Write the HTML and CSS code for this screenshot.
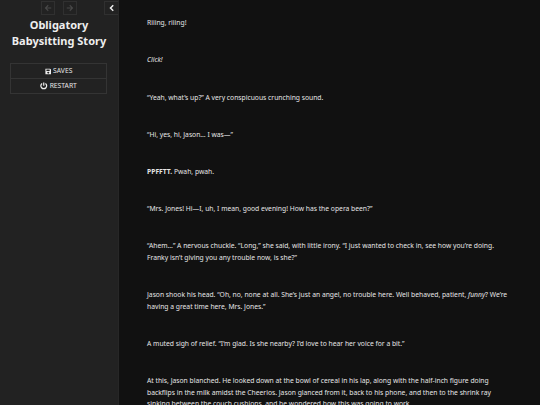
FILE: index.html
```
<!DOCTYPE html>
<html lang="en">
<head>
  <meta charset="UTF-8">
  <meta name="viewport" content="width=device-width, initial-scale=1.0">
  <title>Obligatory Babysitting Story</title>
  <link rel="stylesheet" href="styles.css">
</head>
<body>
<div id="ui-bar">
  <div class="tray">
    <button class="history" disabled aria-label="Back"><svg viewBox="0 0 16 16"><path d="M14.500 8H3M8.500 2.500L3 8l5.500 5.500"/></svg></button>
    <button class="history" disabled aria-label="Forward"><svg viewBox="0 0 16 16"><path d="M1.500 8H13M7.500 2.500L13 8l-5.500 5.500"/></svg></button>
    <button class="toggle" aria-label="Toggle sidebar"><svg viewBox="0 0 16 16"><path d="M10.500 2.500L5 8l5.500 5.500"/></svg></button>
  </div>
  <h1>Obligatory Babysitting Story</h1>
  <ul class="menu">
    <li><a><svg viewBox="0 0 16 16"><path fill-rule="evenodd" d="M1 1h11.500l2.500 2.500V15H1zM3.500 3v3.500h8V3zM8 8.500a2.300 2.300 0 1 0 .01 0z"/></svg><span>SAVES</span></a></li>
    <li><a><svg class="power" viewBox="0 0 16 16"><path d="M4.500 3a6.200 6.200 0 1 0 7 0M8 1v7"/></svg><span>RESTART</span></a></li>
  </ul>
</div>
<div id="story">
  <p>Riiing, riiing!</p>
  <p><em>Click!</em></p>
  <p>“Yeah, what’s up?” A very conspicuous crunching sound.</p>
  <p>“Hi, yes, hi, Jason… I was—”</p>
  <p><strong>PPFFTT.</strong> Pwah, pwah.</p>
  <p>“Mrs. Jones! Hi—I, uh, I mean, good evening! How has the opera been?”</p>
  <p>“Ahem…” A nervous chuckle. “Long,” she said, with little irony. “I just wanted to check in, see how you’re doing. Franky isn’t giving you any trouble now, is she?”</p>
  <p>Jason shook his head. “Oh, no, none at all. She’s just an angel, no trouble here. Well behaved, patient, <em>funny</em>? We’re having a great time here, Mrs. Jones.”</p>
  <p>A muted sigh of relief. “I’m glad. Is she nearby? I’d love to hear her voice for a bit.”</p>
  <p>At this, Jason blanched. He looked down at the bowl of cereal in his lap, along with the half-inch figure doing backflips in the milk amidst the Cheerios. Jason glanced from it, back to his phone, and then to the shrink ray sinking between the couch cushions, and he wondered how this was going to work.</p>
</div>
</body>
</html>
```
FILE: styles.css
```
* {
  box-sizing: border-box;
}
body {
  display: flex;
  height: 405px;
  margin: 0;
  overflow: hidden;
  background: #111;
  color: #e6e6e6;
  font-family: "Noto Sans", sans-serif;
  font-size: 6.75px;
  line-height: 11.8px;
}
#ui-bar {
  flex: none;
  width: 119px;
  height: 405px;
  background: #222;
  border-right: 1px solid #272727;
}
.tray {
  display: flex;
  height: 17px;
  padding: 1px 0 0 41px;
}
.tray button {
  display: flex;
  align-items: center;
  justify-content: center;
  width: 14px;
  height: 14px;
  padding: 0;
  background: transparent;
  border: 1px solid #303030;
}
.tray svg {
  flex: none;
  width: 8px;
  height: 8px;
  fill: none;
  stroke: #eee;
  stroke-width: 3;
}
.tray .history {
  margin-right: 8px;
}
.tray .history svg {
  stroke: #484848;
  stroke-width: 2.2;
}
.tray .toggle {
  margin-left: auto;
  border-right: none;
}
h1 {
  margin: 0 8px;
  color: #eee;
  font-size: 11px;
  line-height: 16.2px;
  text-align: center;
}
.menu {
  margin: 13.6px 11px 0 10px;
  padding: 0;
  list-style: none;
  border: 1px solid #343434;
}
.menu li + li {
  border-top: 1px solid #343434;
}
.menu a {
  display: flex;
  align-items: center;
  justify-content: center;
  gap: 2px;
  height: 14px;
}
.menu svg {
  width: 6.5px;
  height: 7px;
  fill: #eee;
}
.menu .power {
  width: 7.5px;
  height: 7.5px;
  fill: none;
  stroke: #eee;
  stroke-width: 2.6;
}
#story {
  width: 393px;
  padding: 17.4px 0 0 28px;
}
#story p {
  margin: 0 0 25.3px;
}
```
